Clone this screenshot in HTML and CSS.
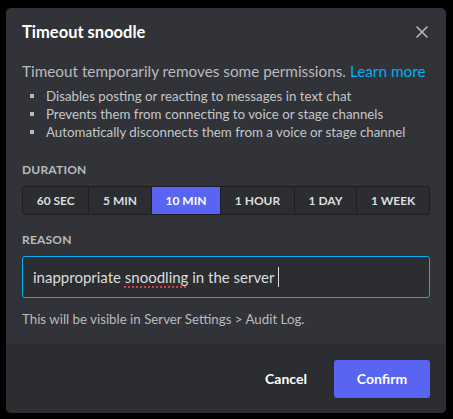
FILE: index.html
```html
<!DOCTYPE html>
<html>
<head>
<meta charset="utf-8">
<link rel="stylesheet" href="styles.css">
</head>
<body>
<div class="modal">
  <div class="body">
    <div class="header">
      <h2 class="title">Timeout snoodle</h2>
      <button class="close" aria-label="Close">
        <svg width="12" height="12" viewBox="0 0 12 12"><path d="M1 1L11 11M11 1L1 11" stroke="#b9bbbe" stroke-width="1.6" stroke-linecap="round"/></svg>
      </button>
    </div>
    <p class="desc">Timeout temporarily removes some permissions. <a class="link">Learn more</a></p>
    <ul class="bullets">
      <li>Disables posting or reacting to messages in text chat</li>
      <li>Prevents them from connecting to voice or stage channels</li>
      <li>Automatically disconnects them from a voice or stage channel</li>
    </ul>
    <div class="label">Duration</div>
    <div class="segments">
      <div class="seg">60 SEC</div>
      <div class="seg">5 MIN</div>
      <div class="seg active">10 MIN</div>
      <div class="seg">1 HOUR</div>
      <div class="seg">1 DAY</div>
      <div class="seg">1 WEEK</div>
    </div>
    <div class="label reason">Reason</div>
    <div class="input">inappropriate <span class="misspell">snoodling</span> in the server <span class="caret"></span></div>
    <div class="hint">This will be visible in Server Settings &gt; Audit Log.</div>
  </div>
  <div class="footer">
    <button class="btn cancel">Cancel</button>
    <button class="btn confirm">Confirm</button>
  </div>
</div>
</body>
</html>
```
FILE: styles.css
```css
* { box-sizing: border-box; }
html, body { margin: 0; padding: 0; background: #000; }
body {
  font-family: Lato, "Noto Sans", sans-serif;
  padding: 8px 6px;
}
.modal {
  width: 440px;
  height: 405px;
  background: #313338;
  border-radius: 5px;
  overflow: hidden;
  display: flex;
  flex-direction: column;
}
.body {
  flex: 1;
  min-height: 0;
  padding: 12px 16px 0 16px;
}
.header {
  display: flex;
  justify-content: space-between;
  align-items: center;
  height: 24px;
}
.title {
  margin: 0;
  color: #fff;
  font-size: 16.5px;
  font-weight: 700;
  line-height: 24px;
}
.close {
  background: none;
  border: 0;
  padding: 0;
  margin-right: 2px;
  width: 12px;
  height: 12px;
  display: flex;
}
.desc {
  margin: 17px 0 0 0;
  color: #b9bbbe;
  font-size: 15.3px;
  line-height: 20px;
  white-space: nowrap;
}
.link { color: #00aff4; }
.bullets {
  margin: 6px 0 0 0;
  padding: 0 0 0 24px;
  list-style: none;
  color: #c4c6c9;
  font-size: 13.3px;
  line-height: 18px;
}
.bullets li { position: relative; }
.bullets li::before {
  content: "";
  position: absolute;
  left: -16px;
  top: 7px;
  width: 4px;
  height: 4px;
  background: #b9bbbe;
}
.label {
  margin-top: 21px;
  color: #b9bbbe;
  font-size: 12px;
  font-weight: 700;
  text-transform: uppercase;
  letter-spacing: 0.2px;
  line-height: 16px;
}
.segments {
  margin-top: 8px;
  display: flex;
  height: 29px;
  border: 1px solid #1e1f22;
  border-radius: 3px;
  background: #2b2d31;
  overflow: hidden;
}
.seg {
  flex: 1 1 auto;
  display: flex;
  align-items: center;
  justify-content: center;
  padding: 0 4px;
  white-space: nowrap;
  color: #dcddde;
  font-size: 12px;
  font-weight: 700;
  border-left: 1px solid #1e1f22;
}
.seg:first-child { border-left: 0; }
.seg.active { background: #5865f2; color: #fff; }
.reason { margin-top: 17px; }
.input {
  margin-top: 8px;
  height: 42px;
  border: 1px solid #00aff4;
  border-radius: 3px;
  background: #2b2d31;
  color: #dcddde;
  font-size: 15px;
  padding: 0 10px;
  display: flex;
  align-items: center;
  white-space: pre;
}
.misspell {
  text-decoration: underline dotted #e03c3c;
  text-decoration-thickness: 2px;
  text-underline-offset: 3px;
}
.caret {
  display: inline-block;
  width: 1px;
  height: 20px;
  background: #dcddde;
}
.hint {
  margin-top: 12px;
  color: #b9bbbe;
  font-size: 13.3px;
  line-height: 18px;
}
.footer {
  height: 69px;
  flex: none;
  background: #2b2d31;
  display: flex;
  justify-content: flex-end;
  align-items: center;
  padding: 0 16px;
}
.btn {
  min-width: 96px;
  height: 38px;
  border: 0;
  border-radius: 3px;
  font-family: inherit;
  font-size: 14px;
  font-weight: 700;
  color: #fff;
  padding: 2px 16px;
  background: none;
}
.confirm { background: #5865f2; }
```
